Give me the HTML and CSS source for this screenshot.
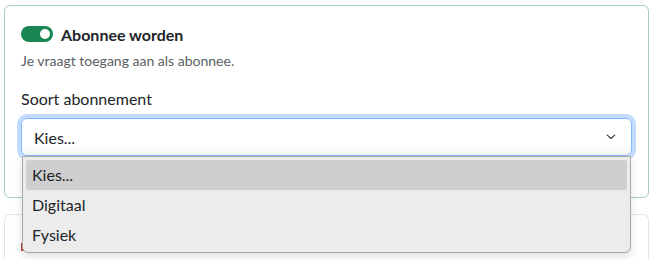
FILE: index.html
```html
<!DOCTYPE html>
<html lang="nl">
<head>
    <meta charset="UTF-8">
    <meta name="viewport" content="width=device-width, initial-scale=1.0">
    <title>Abonnement</title>
    <link rel="stylesheet" href="styles.css">
</head>
<body>
    <div class="page">
        <div class="card card-active">
            <div class="form-check">
                <span class="switch"><span class="knob"></span></span>
                <label class="check-label">Abonnee worden</label>
            </div>
            <div class="form-text">Je vraagt toegang aan als abonnee.</div>

            <div class="field">
                <label class="form-label">Soort abonnement</label>
                <div class="select-wrap">
                    <div class="form-select">
                        <span>Kies...</span>
                        <svg class="chevron" viewBox="0 0 16 16" width="16" height="12">
                            <path d="m3 5.5 5 4.5 5-4.5" fill="none" stroke="#343a40" stroke-width="1.5" stroke-linecap="round" stroke-linejoin="round"/>
                        </svg>
                    </div>
                    <!-- geopende lijst -->
                    <ul class="dropdown">
                        <li class="selected">Kies...</li>
                        <li>Digitaal</li>
                        <li>Fysiek</li>
                    </ul>
                </div>
            </div>
        </div>

        <div class="card card-next">
            <div class="next-mark"></div>
        </div>
    </div>
</body>
</html>
```

FILE: styles.css
```css
:root {
    --text-color: #212529;
    --muted-color: #595f66;
    --success: #198754;
    --success-border: #a3cfbb;
    --border-color: #e3e6e9;
}

body {
    margin: 0;
    font-family: "Lato", "Noto Sans", sans-serif;
    color: var(--text-color);
    background: white;
}

.page {
    padding: 5px 5px 0 4px;
}

.card {
    border-radius: 6px;
    background: white;
}

.card-active {
    border: 1px solid var(--success-border);
    padding: 16px 16px 41px 16px;
}

.card-next {
    margin-top: 16px;
    height: 28px;
    border: 1px solid var(--border-color);
    border-bottom: none;
    border-radius: 6px 6px 0 0;
    padding: 16px 16px 0;
}

.next-mark {
    width: 4px;
    height: 8px;
    margin-top: 12px;
    background: #c0392b;
}

.form-check {
    display: flex;
    align-items: center;
    height: 24px;
    margin-bottom: 2px;
}

.switch {
    width: 32px;
    height: 16px;
    border-radius: 8px;
    background: var(--success);
    display: flex;
    align-items: center;
    justify-content: flex-end;
    padding: 0 3px;
    box-sizing: border-box;
    margin-right: 8px;
}

.knob {
    width: 10px;
    height: 10px;
    border-radius: 50%;
    background: white;
}

.check-label {
    font-weight: bold;
    font-size: 16px;
}

.form-text {
    margin-top: 4px;
    font-size: 14px;
    line-height: 21px;
    color: var(--muted-color);
}

.field {
    margin-top: 16px;
}

.form-label {
    display: block;
    font-size: 16px;
    line-height: 24px;
    margin-bottom: 7px;
}

.select-wrap {
    position: relative;
}

.form-select {
    height: 38px;
    box-sizing: border-box;
    display: flex;
    align-items: center;
    justify-content: space-between;
    padding: 0 12px;
    font-size: 16px;
    border: 1px solid #86b7fe;
    border-radius: 6px;
    background: linear-gradient(to bottom, white 70%, #f4f5f6);
    box-shadow: 0 0 0 4px rgba(13, 110, 253, 0.25);
}

.dropdown {
    position: absolute;
    top: 38px;
    left: 1px;
    right: 1px;
    margin: 0;
    padding: 3px 3px 2px;
    list-style: none;
    background: #ececec;
    border: 1px solid #a9a9a9;
    border-radius: 0 0 6px 6px;
    box-shadow: 0 4px 10px rgba(0, 0, 0, 0.12);
}

.dropdown li {
    height: 30px;
    line-height: 30px;
    padding: 0 6px;
    font-size: 16px;
    border-radius: 3px;
}

.dropdown li.selected {
    background: #cfcfcf;
}
```
